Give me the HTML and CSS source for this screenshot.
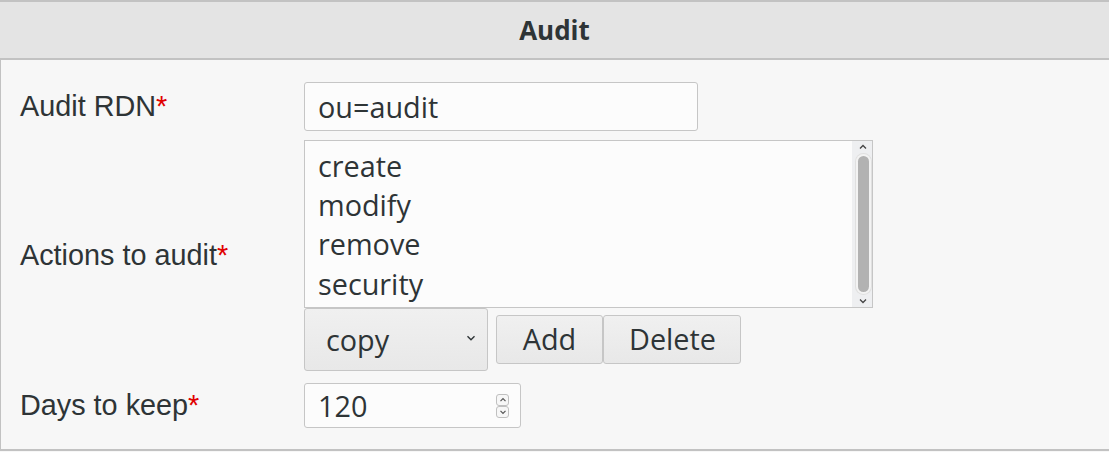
FILE: index.html
```html
<!DOCTYPE html>
<html>
<head>
<meta charset="utf-8">
<link rel="stylesheet" href="styles.css">
</head>
<body>
<div class="panel">
  <div class="panel-header">Audit</div>
  <div class="panel-body">
    <div class="row row-rdn">
      <label class="label">Audit RDN<span class="req">*</span></label>
      <div class="control">
        <input class="text-input rdn-input" type="text" value="ou=audit">
      </div>
    </div>
    <div class="row row-actions">
      <label class="label">Actions to audit<span class="req">*</span></label>
      <div class="control">
        <div class="listbox">
          <div class="list-items">
            <div class="list-item">create</div>
            <div class="list-item">modify</div>
            <div class="list-item">remove</div>
            <div class="list-item">security</div>
          </div>
          <div class="scrollbar">
            <svg class="sb-arrow" width="10" height="8" viewBox="0 0 10 8"><path d="M2 5.5 L5 2.5 L8 5.5" fill="none" stroke="#444" stroke-width="1.3"/></svg>
            <div class="sb-track"><div class="sb-thumb"></div></div>
            <svg class="sb-arrow" width="10" height="8" viewBox="0 0 10 8"><path d="M2 2.5 L5 5.5 L8 2.5" fill="none" stroke="#444" stroke-width="1.3"/></svg>
          </div>
        </div>
        <div class="action-bar">
          <div class="select">
            <span class="select-value">copy</span>
            <svg class="select-arrow" width="10" height="6" viewBox="0 0 10 6"><path d="M1.5 1.2 L5 4.7 L8.5 1.2" fill="none" stroke="#2e3436" stroke-width="1.4"/></svg>
          </div>
          <button class="btn btn-add">Add</button><button class="btn btn-delete">Delete</button>
        </div>
      </div>
    </div>
    <div class="row row-days">
      <label class="label">Days to keep<span class="req">*</span></label>
      <div class="control">
        <div class="number-input">
          <span class="number-value">120</span>
          <div class="spinner">
            <span class="spin-btn"><svg width="8" height="6" viewBox="0 0 8 6"><path d="M1.5 4.2 L4 1.7 L6.5 4.2" fill="none" stroke="#555" stroke-width="1.2"/></svg></span>
            <span class="spin-btn"><svg width="8" height="6" viewBox="0 0 8 6"><path d="M1.5 1.8 L4 4.3 L6.5 1.8" fill="none" stroke="#555" stroke-width="1.2"/></svg></span>
          </div>
        </div>
      </div>
    </div>
  </div>
</div>
</body>
</html>
```

FILE: styles.css
```css
* { box-sizing: border-box; }

html, body {
  margin: 0;
  padding: 0;
  background: #f7f7f7;
}

body {
  color: #2e3436;
  font-family: "Open Sans", "Noto Sans", sans-serif;
}

.panel {
  width: 1109px;
}

.panel-header {
  height: 60px;
  background: #e4e4e4;
  border-top: 2px solid #c2c2c2;
  border-bottom: 2px solid #c2c2c2;
  display: flex;
  align-items: center;
  justify-content: center;
  font-family: "Open Sans", sans-serif;
  font-weight: 700;
  font-size: 26px;
  color: #2e3436;
  padding-bottom: 1px;
}

.panel-body {
  background: #f7f7f7;
  border-left: 1px solid #c2c2c2;
  border-bottom: 2px solid #c2c2c2;
  padding: 22px 0 21px 19px;
}

.row {
  display: flex;
  align-items: center;
}

.row-rdn { margin-bottom: 9px; }
.row-actions { margin-bottom: 12px; }

.label {
  width: 284px;
  flex: none;
  font-family: "Liberation Sans", Arial, sans-serif;
  font-size: 28.8px;
  color: #2e3436;
}

.req {
  color: #e00000;
}

.control {
  display: flex;
  flex-direction: column;
}

.text-input {
  font-family: "Open Sans", sans-serif;
  font-size: 28.8px;
  color: #2e3436;
  background: #fcfcfc;
  border: 1px solid #c6c6c6;
  border-radius: 3px;
  padding: 0 13px;
  outline: none;
  margin: 0;
}

.rdn-input {
  width: 394px;
  height: 49px;
}

.listbox {
  width: 569px;
  height: 168px;
  background: #fcfcfc;
  border: 1px solid #c6c6c6;
  display: flex;
  font-size: 28.8px;
}

.list-items {
  flex: 1;
  padding: 5px 13px 0;
  overflow: hidden;
}

.list-item {
  line-height: 39.2px;
  height: 39.2px;
}

.scrollbar {
  width: 20px;
  background: #eeeff1;
  display: flex;
  flex-direction: column;
  align-items: center;
  padding: 2px 0;
}

.sb-arrow {
  flex: none;
  margin-left: 2px;
}

.sb-track {
  flex: 1;
  padding: 4px 0;
  display: flex;
  justify-content: center;
  margin: 1px 0 1px 2px;
}

.sb-thumb {
  width: 11px;
  background: #b2b2b2;
  border-radius: 6px;
  box-shadow: 0 0 0 2px #f3f3f3, 0 0 0 3px #e0e0e0;
}

.action-bar {
  display: flex;
  align-items: center;
  margin-top: 0;
}

.select {
  width: 184px;
  height: 63px;
  display: flex;
  align-items: center;
  justify-content: space-between;
  padding: 0 11px 0 21px;
  background: linear-gradient(#f0f0f0, #e8e8e8);
  border: 1px solid #c6c6c6;
  border-radius: 3px;
  font-size: 28.8px;
}

.select-arrow {
  margin-top: -4px;
}

.btn {
  font-family: "Open Sans", sans-serif;
  font-size: 28.8px;
  color: #2e3436;
  height: 49px;
  padding: 0 25px;
  background: linear-gradient(#f0f0f0, #e8e8e8);
  border: 1px solid #c6c6c6;
  border-radius: 3px;
  margin: 0;
  line-height: 1;
}

.btn-add {
  margin-left: 8px;
  width: 107px;
}

.btn-delete {
  width: 138px;
}

.number-input {
  width: 217px;
  height: 45px;
  background: #fcfcfc;
  border: 1px solid #c6c6c6;
  border-radius: 3px;
  display: flex;
  align-items: center;
  justify-content: space-between;
  padding: 0 11px 0 13px;
  font-size: 28.8px;
}

.spinner {
  display: flex;
  flex-direction: column;
}

.spin-btn {
  width: 13px;
  height: 12px;
  border: 1px solid #c0c0c0;
  border-radius: 3px;
  background: #f7f7f7;
  display: flex;
  align-items: center;
  justify-content: center;
}

.spin-btn + .spin-btn {
  margin-top: 0;
}
```
